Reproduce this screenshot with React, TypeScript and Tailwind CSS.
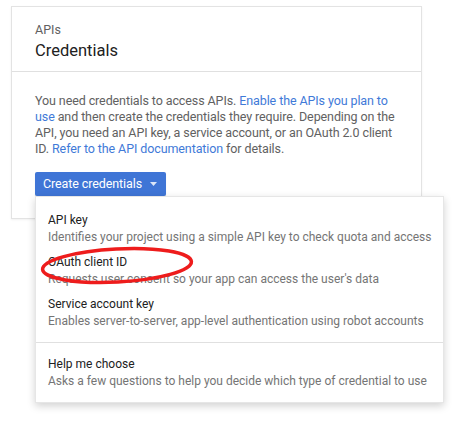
import React from 'react';

const items = [
  { title: 'API key', desc: 'Identifies your project using a simple API key to check quota and access' },
  { title: 'OAuth client ID', desc: "Requests user consent so your app can access the user's data" },
  { title: 'Service account key', desc: 'Enables server-to-server, app-level authentication using robot accounts' },
];

function MenuItem({ title, desc }: { title: string; desc: string }) {
  return (
    <div className="px-[12px] py-[4px] leading-[17px] whitespace-nowrap text-[12px]">
      <div className="text-[#212121]">{title}</div>
      <div className="text-[#757575]">{desc}</div>
    </div>
  );
}

export default function App() {
  return (
    <div className="relative w-[457px] h-[430px] bg-white font-['Roboto',sans-serif]">
      <div className="pt-[6px] pl-[11px]">
        <div className="w-[411px] bg-white border border-[#e3e3e3] shadow-[0_1px_2px_rgba(0,0,0,0.06)]">
          <div className="h-[65px] pl-[23px] pt-[15px] border-b border-[#e0e0e0]">
            <div className="text-[12.5px] leading-[15px] text-[#616161]">APIs</div>
            <div className="text-[16.5px] leading-[22px] text-[#212121] mt-[3px]">Credentials</div>
          </div>
          <div className="pl-[23px] pr-[20px] pt-[21px] pb-[22px]">
            <p className="text-[12.5px] leading-[16px] tracking-[-0.1px] text-[#616161]">
              You need credentials to access APIs.{' '}
              <span className="text-[#3f7ad8]">Enable the APIs you plan to use</span> and then create the credentials they
              require. Depending on the API, you need an API key, a service account, or an OAuth 2.0 client ID.{' '}
              <span className="text-[#3f7ad8]">Refer to the API documentation</span> for details.
            </p>
            <button className="mt-[15px] h-[24px] pl-[8px] pr-[9px] flex items-center gap-[8px] bg-[#3f75d6] rounded-[2px] text-white text-[12.5px] tracking-[-0.1px] shadow-[0_1px_1px_rgba(0,0,0,0.15)]">
              Create credentials
              <svg width="7" height="4" viewBox="0 0 7 4">
                <path d="M0 0h7L3.5 4z" fill="#dbe6f8" />
              </svg>
            </button>
          </div>
        </div>
      </div>

      <div className="absolute left-[35px] top-[196px] w-[409px] bg-white border border-[#e6e6e6] shadow-[0_3px_8px_rgba(0,0,0,0.18)] pt-[11px]">
        {items.map((it) => (
          <MenuItem key={it.title} {...it} />
        ))}
        <div className="mt-[8px] border-t border-[#e0e0e0] pt-[9px] pb-[8px]">
          <MenuItem title="Help me choose" desc="Asks a few questions to help you decide which type of credential to use" />
        </div>
      </div>

      <svg className="absolute left-0 top-0 pointer-events-none" width="457" height="430">
        <ellipse cx="117" cy="265.5" rx="74.5" ry="16.5" fill="none" stroke="#ee1c1c" strokeWidth="3.5" transform="rotate(-3 117 265.5)" />
      </svg>
    </div>
  );
}
